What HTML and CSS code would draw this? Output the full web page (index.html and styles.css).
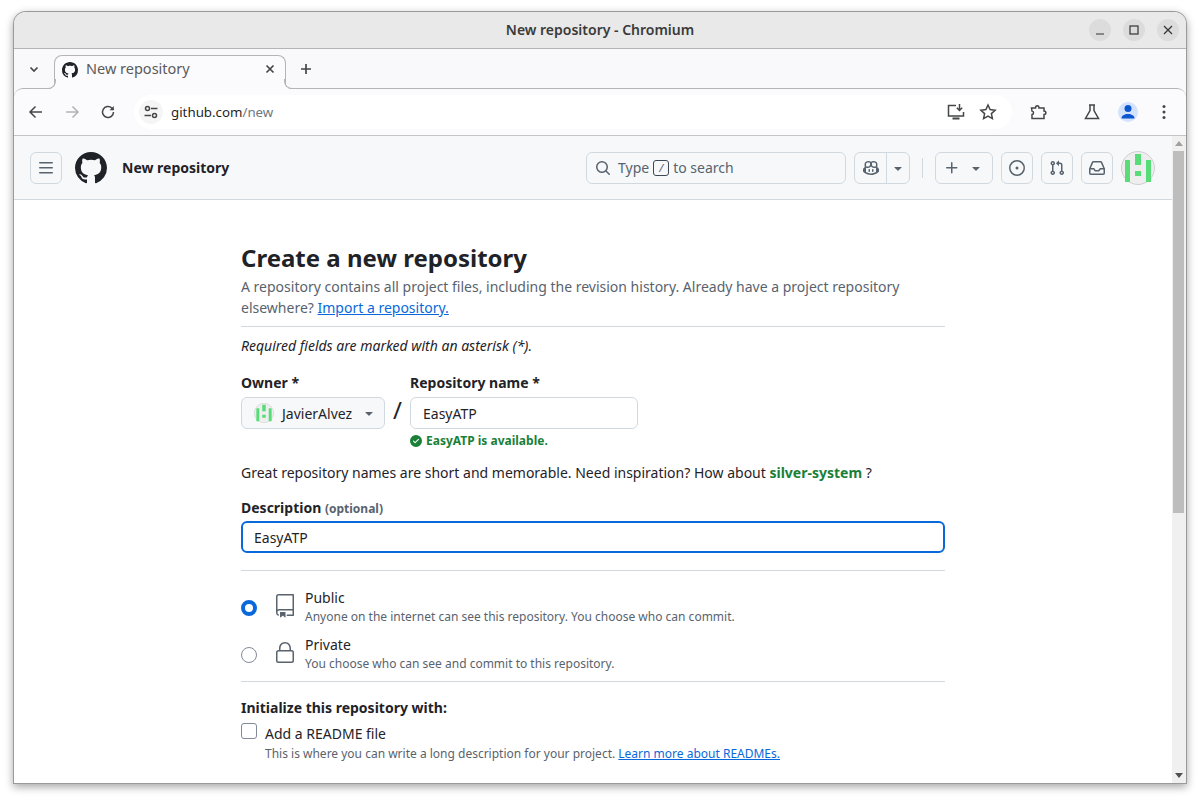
FILE: index.html
```html
<!DOCTYPE html>
<html lang="en">
<head>
<meta charset="utf-8">
<title>New repository - Chromium</title>
<link rel="stylesheet" href="styles.css">
</head>
<body>
<div class="window">
  <div class="titlebar">
    <span class="title">New repository - Chromium</span>
    <div class="win-controls">
      <span class="win-btn"><svg viewBox="0 0 22 22" class="i22"><path d="M7 15h8" class="wstroke"/></svg></span>
      <span class="win-btn"><svg viewBox="0 0 22 22" class="i22"><rect x="7" y="7" width="8" height="8" class="wstroke"/></svg></span>
      <span class="win-btn"><svg viewBox="0 0 22 22" class="i22"><path d="M7 7l8 8M15 7l-8 8" class="wstroke"/></svg></span>
    </div>
  </div>
  <div class="tabstrip">
    <span class="tab-menu"><svg viewBox="0 0 16 16" class="i16"><path d="M4.5 6.5 8 10l3.500-3.500" class="cstroke bold"/></svg></span>
    <div class="tab">
      <svg viewBox="0 0 16 16" class="i16 ink"><path d="M8 0c4.420 0 8 3.580 8 8a8.013 8.013 0 0 1-5.450 7.590c-.4.080-.55-.17-.55-.38 0-.27.010-1.130.010-2.200 0-.75-.25-1.230-.54-1.480 1.780-.2 3.650-.88 3.650-3.950 0-.88-.31-1.590-.82-2.150.080-.2.360-1.020-.08-2.120 0 0-.67-.22-2.200.82-.64-.18-1.320-.27-2-.27-.68 0-1.360.090-2 .27-1.530-1.030-2.200-.82-2.200-.82-.44 1.100-.16 1.920-.08 2.120-.51.560-.82 1.280-.82 2.150 0 3.060 1.860 3.750 3.640 3.950-.23.2-.44.55-.51 1.070-.46.210-1.610.55-2.330-.66-.15-.24-.6-.83-1.230-.82-.67.010-.27.380.010.530.34.190.73.9.82 1.130.16.450.68 1.310 2.690.94 0 .67.010 1.300.010 1.490 0 .21-.15.450-.55.380A7.995 7.995 0 0 1 0 8c0-4.420 3.580-8 8-8Z"/></svg>
      <span class="tab-title">New repository</span>
      <svg viewBox="0 0 16 16" class="i16 tab-close"><path d="M4.500 4.500l7 7M11.500 4.500l-7 7" class="cstroke bold"/></svg>
    </div>
    <span class="new-tab"><svg viewBox="0 0 16 16" class="i16"><path d="M8 3v10M3 8h10" class="cstroke bold"/></svg></span>
  </div>
  <div class="toolbar">
    <span class="tool"><svg viewBox="0 0 16 16" class="i16"><path d="M14 8H2.500M7.500 2.500 2 8l5.500 5.500" class="cstroke"/></svg></span>
    <span class="tool dim"><svg viewBox="0 0 16 16" class="i16"><path d="M2 8h11.500M8.500 2.500 14 8l-5.500 5.500" class="cstroke"/></svg></span>
    <span class="tool"><svg viewBox="0 0 16 16" class="i16"><path d="M13.500 8A5.500 5.500 0 1 1 11.800 4L13.500 5.700" class="cstroke"/><path d="M13.800 2v4.300H9.500z" class="cfill"/></svg></span>
    <div class="omnibox">
      <span class="site-info"><svg viewBox="0 0 16 16" class="i16"><circle cx="4.500" cy="4.500" r="2" class="cstroke"/><path d="M8 4.500h6.500M1.500 11.500H8" class="cstroke"/><circle cx="11.500" cy="11.500" r="2" class="cstroke"/></svg></span>
      <span class="url">github.com<span class="url-path">/new</span></span>
      <div class="omni-actions">
        <svg viewBox="0 0 18 18" class="i18"><path d="M9 2.500H1.500v10.500h15V9" class="cstroke"/><path d="M5.500 15.500h7" class="cstroke thick"/><path d="M12.500 1v6.500M9.800 4.800l2.700 2.700 2.700-2.700" class="cstroke"/></svg>
        <svg viewBox="0 0 18 18" class="i18"><path d="M9 2l2.100 4.600 5 .6-3.700 3.400 1 5L9 13.100l-4.400 2.500 1-5L1.900 7.200l5-.6z" class="cstroke"/></svg>
      </div>
    </div>
    <div class="extras">
      <span class="extra"><svg viewBox="0 0 18 18" class="i18"><path d="M2.500 5H6.500C6.500 2 10 2 10 5H15V8C17.500 8 17.500 11.500 15 11.500V15.500H3V11.500C5 11.500 5 8 3 8Z" class="cstroke"/></svg></span>
      <span class="extra"><svg viewBox="0 0 18 18" class="i18"><path d="M6 2h6M7 2v5.500L2.500 15.500h13L11 7.500V2" class="cstroke"/></svg></span>
      <span class="profile"><svg viewBox="0 0 20 20" class="i20"><circle cx="10" cy="6.500" r="3.500" class="pfill"/><path d="M3.500 16.500c0-3 3-4.500 6.500-4.500s6.500 1.500 6.500 4.500z" class="pfill"/></svg></span>
      <span class="extra dots"><svg viewBox="0 0 16 16" class="i16"><circle cx="8" cy="2.500" r="1.500" class="cfill"/><circle cx="8" cy="8" r="1.500" class="cfill"/><circle cx="8" cy="13.500" r="1.500" class="cfill"/></svg></span>
    </div>
  </div>
  <div class="viewport">
    <div class="page">
      <header class="gh-header">
        <div class="gh-left">
          <button class="gh-btn"><svg viewBox="0 0 16 16" class="i16 muted"><path d="M1 2.750A.75.75 0 0 1 1.750 2h12.500a.75.75 0 0 1 0 1.500H1.750A.75.75 0 0 1 1 2.750Zm0 5A.75.75 0 0 1 1.750 7h12.500a.75.75 0 0 1 0 1.500H1.750A.75.75 0 0 1 1 7.750ZM1.750 12h12.500a.75.75 0 0 1 0 1.500H1.750a.75.75 0 0 1 0-1.500Z"/></svg></button>
          <svg viewBox="0 0 16 16" class="gh-logo ink"><path d="M8 0c4.420 0 8 3.580 8 8a8.013 8.013 0 0 1-5.450 7.590c-.4.080-.55-.17-.55-.38 0-.27.010-1.130.010-2.200 0-.75-.25-1.230-.54-1.480 1.780-.2 3.650-.88 3.650-3.950 0-.88-.31-1.590-.82-2.150.080-.2.360-1.020-.08-2.120 0 0-.67-.22-2.200.82-.64-.18-1.320-.27-2-.27-.68 0-1.360.090-2 .27-1.530-1.030-2.200-.82-2.200-.82-.44 1.100-.16 1.920-.08 2.120-.51.560-.82 1.280-.82 2.150 0 3.060 1.860 3.750 3.640 3.950-.23.2-.44.55-.51 1.070-.46.210-1.610.55-2.330-.66-.15-.24-.6-.83-1.230-.82-.67.010-.27.380.010.530.34.190.73.9.82 1.130.16.450.68 1.310 2.690.94 0 .67.010 1.300.010 1.490 0 .21-.15.450-.55.380A7.995 7.995 0 0 1 0 8c0-4.420 3.580-8 8-8Z"/></svg>
          <span class="gh-title">New repository</span>
        </div>
        <div class="gh-right">
          <div class="search">
            <svg viewBox="0 0 16 16" class="i16 muted"><path d="M10.680 11.740a6 6 0 0 1-7.922-8.982 6 6 0 0 1 8.982 7.922l3.040 3.040a.749.749 0 0 1-.326 1.275.749.749 0 0 1-.734-.215ZM11.500 7a4.499 4.499 0 1 0-8.997 0A4.499 4.499 0 0 0 11.500 7Z"/></svg>
            <span class="search-text">Type <kbd class="slash">/</kbd> to search</span>
          </div>
          <div class="split">
            <span class="split-main"><svg viewBox="0 0 16 16" class="i16 muted"><path d="M7.998 15.035c-4.562 0-7.873-2.914-7.998-3.749V9.338c.085-.628.677-1.686 1.588-2.065.013-.07.024-.143.036-.218.029-.183.06-.384.126-.612-.201-.508-.254-1.084-.254-1.656 0-.87.128-1.769.693-2.484.579-.733 1.494-1.124 2.724-1.261 1.206-.134 2.262.034 2.944.765.05.053.096.108.139.165.044-.057.094-.112.143-.165.682-.731 1.738-.899 2.944-.765 1.230.137 2.145.528 2.724 1.261.566.715.693 1.614.693 2.484 0 .572-.053 1.148-.254 1.656.066.228.098.429.126.612.012.076.024.148.037.218.924.385 1.522 1.471 1.591 2.095v1.872c0 .766-3.351 3.795-8.002 3.795Zm0-1.485c2.280 0 4.584-1.110 5.002-1.433V7.862l-.023-.116c-.49.21-1.075.291-1.727.291-1.146 0-2.059-.327-2.710-.991A3.222 3.222 0 0 1 8 6.303a3.240 3.240 0 0 1-.544.743c-.65.664-1.563.991-2.710.991-.652 0-1.236-.081-1.727-.291l-.023.116v4.255c.419.323 2.722 1.433 5.002 1.433ZM6.762 2.830c-.193-.206-.637-.413-1.682-.297-1.019.113-1.479.404-1.713.7-.247.312-.369.789-.369 1.554 0 .793.129 1.171.308 1.371.162.181.519.379 1.442.379.853 0 1.339-.235 1.638-.54.315-.322.527-.827.617-1.553.117-.935-.037-1.395-.241-1.614Zm4.155-.297c-1.044-.116-1.488.091-1.681.297-.204.219-.359.679-.242 1.614.091.726.303 1.231.618 1.553.299.305.784.54 1.638.54.922 0 1.280-.198 1.442-.379.179-.2.308-.578.308-1.371 0-.765-.123-1.242-.37-1.554-.233-.296-.693-.587-1.713-.7Z"/><path d="M6.250 9.037a.75.75 0 0 1 .75.75v1.501a.75.75 0 0 1-1.500 0V9.787a.75.75 0 0 1 .75-.75Zm4.250.75v1.501a.75.75 0 0 1-1.500 0V9.787a.75.75 0 0 1 1.500 0Z"/></svg></span>
            <span class="split-caret"><svg viewBox="0 0 16 16" class="i16 muted"><path d="m4.427 7.427 3.396 3.396a.25.25 0 0 0 .354 0l3.396-3.396A.25.25 0 0 0 11.396 7H4.604a.25.25 0 0 0-.177.427Z"/></svg></span>
          </div>
          <span class="divider"></span>
          <button class="gh-btn wide">
            <svg viewBox="0 0 16 16" class="i16 muted"><path d="M7.750 2a.75.75 0 0 1 .75.75V7h4.250a.75.75 0 0 1 0 1.500H8.500v4.250a.75.75 0 0 1-1.500 0V8.500H2.750a.75.75 0 0 1 0-1.500H7V2.750A.75.75 0 0 1 7.750 2Z"/></svg>
            <svg viewBox="0 0 16 16" class="i16 muted"><path d="m4.427 7.427 3.396 3.396a.25.25 0 0 0 .354 0l3.396-3.396A.25.25 0 0 0 11.396 7H4.604a.25.25 0 0 0-.177.427Z"/></svg>
          </button>
          <button class="gh-btn"><svg viewBox="0 0 16 16" class="i16 muted"><path d="M8 9.500a1.500 1.500 0 1 0 0-3 1.500 1.500 0 0 0 0 3Z"/><path d="M8 0a8 8 0 1 1 0 16A8 8 0 0 1 8 0ZM1.500 8a6.500 6.500 0 1 0 13 0 6.500 6.500 0 0 0-13 0Z"/></svg></button>
          <button class="gh-btn"><svg viewBox="0 0 16 16" class="i16 muted"><path d="M1.500 3.250a2.250 2.250 0 1 1 3 2.122v5.256a2.251 2.251 0 1 1-1.500 0V5.372A2.250 2.250 0 0 1 1.500 3.250Zm5.677-.177L9.573.677A.25.25 0 0 1 10 .854V2.500h1A2.500 2.500 0 0 1 13.500 5v5.628a2.251 2.251 0 1 1-1.500 0V5a1 1 0 0 0-1-1h-1v1.646a.25.25 0 0 1-.427.177L7.177 3.427a.25.25 0 0 1 0-.354ZM3.750 2.500a.75.75 0 1 0 0 1.500.75.75 0 0 0 0-1.500Zm0 9.500a.75.75 0 1 0 0 1.500.75.75 0 0 0 0-1.500Zm8.250.75a.75.75 0 1 0 1.500 0 .75.75 0 0 0-1.500 0Z"/></svg></button>
          <button class="gh-btn"><svg viewBox="0 0 16 16" class="i16 muted"><path d="M2.800 2.060A1.750 1.750 0 0 1 4.410 1h7.180c.7 0 1.333.417 1.610 1.060l2.740 6.395c.04.093.06.194.06.295v4.500A1.750 1.750 0 0 1 14.250 15H1.750A1.750 1.750 0 0 1 0 13.250v-4.500c0-.101.02-.202.06-.295Zm1.610.44a.25.25 0 0 0-.23.152L1.887 8H4.750a.75.75 0 0 1 .6.3L6.625 10h2.750l1.275-1.700a.75.75 0 0 1 .6-.3h2.863L11.820 2.652a.25.25 0 0 0-.23-.152Zm10.090 7h-2.875l-1.275 1.700a.75.75 0 0 1-.6.3h-3.500a.75.75 0 0 1-.6-.3L4.375 9.500H1.500v3.750c0 .138.112.25.25.25h12.500a.25.25 0 0 0 .25-.25Z"/></svg></button>
          <svg viewBox="0 0 34 34" class="avatar-lg">
            <circle cx="17" cy="17" r="16.500" class="av-bg"/>
            <path d="M4 9h5v22H4zM14 3h6v11h-6zM14 20h6v5h-6zM25 9h5v22h-5z" class="av-g"/>
          </svg>
        </div>
      </header>
      <main class="content">
        <h1 class="heading">Create a new repository</h1>
        <p class="intro">A repository contains all project files, including the revision history. Already have a project repository elsewhere? <a class="link" href="#">Import a repository.</a></p>
        <hr class="rule first">
        <p class="required">Required fields are marked with an asterisk (*).</p>
        <div class="owner-row">
          <div class="field">
            <label class="label">Owner *</label>
            <div class="owner-select">
              <svg viewBox="0 0 34 34" class="avatar-sm">
                <circle cx="17" cy="17" r="16.500" class="av-bg"/>
                <path d="M4 9h5v22H4zM14 3h6v11h-6zM14 20h6v5h-6zM25 9h5v22h-5z" class="av-g"/>
              </svg>
              <span>JavierAlvez</span>
              <svg viewBox="0 0 16 16" class="i16 muted"><path d="m4.427 7.427 3.396 3.396a.25.25 0 0 0 .354 0l3.396-3.396A.25.25 0 0 0 11.396 7H4.604a.25.25 0 0 0-.177.427Z"/></svg>
            </div>
          </div>
          <span class="slash-sep">/</span>
          <div class="field">
            <label class="label">Repository name *</label>
            <div class="text-input name">EasyATP</div>
            <div class="available">
              <svg viewBox="0 0 16 16" class="i12"><path d="M8 16A8 8 0 1 1 8 0a8 8 0 0 1 0 16Zm3.780-9.720a.751.751 0 0 0-.018-1.042.751.751 0 0 0-1.042-.018L6.750 9.190 5.280 7.720a.751.751 0 0 0-1.042.018.751.751 0 0 0-.018 1.042l2 2a.75.75 0 0 0 1.060 0Z"/></svg>
              <span>EasyATP is available.</span>
            </div>
          </div>
        </div>
        <p class="inspire">Great repository names are short and memorable. Need inspiration? How about <strong class="suggest">silver-system</strong> ?</p>
        <label class="label desc-label">Description <span class="optional">(optional)</span></label>
        <div class="text-input focused">EasyATP</div>
        <hr class="rule vis-top">
        <div class="vis-option">
          <span class="radio checked"></span>
          <svg viewBox="0 0 24 24" class="vis-icon"><path d="M3 2.750A2.750 2.750 0 0 1 5.750 0h14.500a.75.75 0 0 1 .75.75v20.500a.75.75 0 0 1-.75.75h-6a.75.75 0 0 1 0-1.500h5.250v-4H6A1.500 1.500 0 0 0 4.500 18v.75c0 .716.43 1.334 1.050 1.605a.75.75 0 0 1-.6 1.374A3.251 3.251 0 0 1 3 18.750ZM19.500 1.500H5.750c-.69 0-1.250.56-1.250 1.250v12.651A2.989 2.989 0 0 1 6 15h13.500Z"/><path d="M7 18.250a.25.25 0 0 1 .25-.25h5a.25.25 0 0 1 .25.25v5.010a.25.25 0 0 1-.397.201l-2.206-1.604a.25.25 0 0 0-.294 0L7.397 23.460a.25.25 0 0 1-.397-.2Z"/></svg>
          <div class="vis-text"><div class="vis-name">Public</div><div class="note">Anyone on the internet can see this repository. You choose who can commit.</div></div>
        </div>
        <div class="vis-option">
          <span class="radio"></span>
          <svg viewBox="0 0 24 24" class="vis-icon"><path d="M6 9V7.250C6 3.845 8.503 1 12 1s6 2.845 6 6.250V9h.5a2.500 2.500 0 0 1 2.500 2.500v8a2.500 2.500 0 0 1-2.500 2.500h-13A2.500 2.500 0 0 1 3 19.500v-8A2.500 2.500 0 0 1 5.500 9Zm-1.500 2.500v8a1 1 0 0 0 1 1h13a1 1 0 0 0 1-1v-8a1 1 0 0 0-1-1h-13a1 1 0 0 0-1 1Zm3-4.250V9h9V7.250c0-2.670-1.922-4.750-4.500-4.750-2.578 0-4.500 2.080-4.500 4.750Z"/></svg>
          <div class="vis-text"><div class="vis-name">Private</div><div class="note">You choose who can see and commit to this repository.</div></div>
        </div>
        <hr class="rule vis-bottom">
        <div class="init-title">Initialize this repository with:</div>
        <div class="readme">
          <span class="checkbox"></span>
          <div>
            <div class="readme-name">Add a README file</div>
            <div class="note">This is where you can write a long description for your project. <a class="link" href="#">Learn more about READMEs.</a></div>
          </div>
        </div>
      </main>
    </div>
    <div class="scrollbar">
      <span class="arrow up"></span>
      <div class="track"><span class="thumb"></span></div>
      <span class="arrow down"></span>
    </div>
  </div>
</div>
</body>
</html>
```

FILE: styles.css
```css
* { box-sizing: border-box; }
html, body { margin: 0; height: 100%; background: #fff; overflow: hidden; }
body { padding: 12px 14px 17px; font-family: "Noto Sans", sans-serif; font-size: 14px; color: #1f2328; }
svg { display: block; flex: none; }
p { margin: 0; }

.window { height: 771px; display: flex; flex-direction: column; border-radius: 12px 12px 0 0; box-shadow: 0 0 0 1px #9a9a9a, 0 3px 8px 1px rgba(0,0,0,.35); overflow: hidden; background: #f9f9fb; }
.i12 { width: 12px; height: 12px; }
.i16 { width: 16px; height: 16px; }
.i18 { width: 18px; height: 18px; }
.i20 { width: 20px; height: 20px; }
.i22 { width: 22px; height: 22px; }
.ink { fill: #1f2328; }
.muted { fill: #59636e; }
.cstroke { fill: none; stroke: #444746; stroke-width: 1.5; }
.bold { stroke-width: 1.7; }
.thick { stroke-width: 2; }
.cfill { fill: #444746; }
.pfill { fill: #0b57d0; }
.wstroke { fill: none; stroke: #333; stroke-width: 1.2; }

.titlebar { height: 37px; flex: none; background: #e9e9e9; border-bottom: 1px solid #b4b4b4; display: flex; align-items: center; justify-content: center; position: relative; padding-bottom: 2px; }
.title { font-size: 14px; font-weight: 600; color: #3a3a3a; }
.win-controls { position: absolute; right: 7px; top: 7px; display: flex; gap: 12px; }
.win-btn { width: 22px; height: 22px; border-radius: 50%; background: #dcdcdc; }

.tabstrip { height: 39px; flex: none; display: flex; align-items: flex-start; padding-left: 12px; }
.tab-menu { width: 16px; height: 16px; margin-top: 12px; }
.tab { width: 232px; height: 34px; margin: 6px 0 -1px 12px; background: #fbfbfd; border: 1px solid #b4b4b4; border-bottom: 0; border-radius: 8px 8px 0 0; display: flex; align-items: center; padding: 0 8px 6px 7px; gap: 8px; color: #5a5a5a; position: relative; font-size: 14.5px; }
.tab::before, .tab::after { content: ""; position: absolute; bottom: 0; width: 9px; height: 9px; border-bottom: 1px solid #b4b4b4; }
.tab::before { left: -9px; border-right: 1px solid #b4b4b4; border-bottom-right-radius: 8px; box-shadow: 3px 3px 0 3px #fbfbfd; clip-path: inset(0 -6px -6px 0); }
.tab::after { right: -9px; border-left: 1px solid #b4b4b4; border-bottom-left-radius: 8px; box-shadow: -3px 3px 0 3px #fbfbfd; clip-path: inset(0 0 -6px -6px); }
.tab-title { flex: 1; position: relative; padding-bottom: 3px; }
.tab-close { margin: 0 -1px 1px 0; position: relative; }
.new-tab { width: 16px; height: 16px; margin: 12px 0 0 12px; }

.toolbar { height: 48px; flex: none; background: #fbfbfd; border-top: 1px solid #b4b4b4; border-bottom: 1px solid #c4c4c4; border-radius: 9px 9px 0 0; display: flex; align-items: center; padding: 0 14px; }
.tool { width: 16px; height: 16px; margin-right: 20px; }
.tool.dim { opacity: .4; }
.tool:nth-child(3) { margin-right: 18px; }
.omnibox { width: 878px; height: 34px; background: #fff; border-radius: 17px; display: flex; align-items: center; padding: 0 15px 0 5px; }
.site-info { width: 24px; height: 24px; border-radius: 50%; background: #f5f5f5; display: flex; align-items: center; justify-content: center; }
.url { margin-left: 8px; flex: 1; color: #1f1f1f; font-size: 13.3px; }
.url-path { color: #6f7780; }
.omni-actions { display: flex; gap: 14px; }
.extras { display: flex; align-items: center; flex: 1; padding-left: 17px; }
.extra { width: 18px; height: 18px; margin-right: 36px; }
.extras .extra:nth-child(2) { margin-right: 17px; }
.profile { width: 20px; height: 20px; border-radius: 50%; background: #d3e3fd; margin-right: 18px; }
.extra.dots { width: 16px; height: 16px; margin: 0; }

.viewport { flex: 1; min-height: 0; display: flex; background: #fff; }
.page { flex: 1; min-width: 0; overflow: hidden; }
.gh-header { height: 64px; background: #f6f8fa; border-bottom: 1px solid #d1d9e0; display: flex; align-items: center; justify-content: space-between; padding: 0 17px 0 16px; }
.gh-left, .gh-right { display: flex; align-items: center; }
.gh-right { gap: 8px; }
.gh-btn { width: 32px; height: 32px; padding: 0; background: transparent; border: 1px solid #d1d9e0; border-radius: 6px; display: flex; align-items: center; justify-content: center; }
.gh-btn.wide { width: 58px; gap: 8px; }
.gh-logo { width: 32px; height: 32px; margin-left: 13px; }
.gh-title { margin-left: 15px; font-weight: 700; }
.search { width: 260px; height: 32px; border: 1px solid #d1d9e0; border-radius: 6px; display: flex; align-items: center; gap: 7px; padding-left: 8px; color: #59636e; }
.search-text { display: flex; align-items: center; gap: 4px; }
.slash { width: 16px; height: 16px; border: 1px solid #3f4852; border-radius: 3px; font: italic 11px "Noto Sans", sans-serif; display: flex; align-items: center; justify-content: center; }
.split { width: 56px; height: 32px; border: 1px solid #d1d9e0; border-radius: 6px; display: flex; }
.split-main { width: 32px; border-right: 1px solid #d1d9e0; display: flex; align-items: center; justify-content: center; }
.split-caret { flex: 1; display: flex; align-items: center; justify-content: center; }
.divider { width: 1px; height: 20px; background: #d1d9e0; margin: 0 4px; }
.avatar-lg { width: 34px; height: 34px; margin-top: 1px; }
.avatar-sm { width: 20px; height: 20px; }
.av-bg { fill: #eeeeee; stroke: #cfcfcf; stroke-width: 1; }
.av-g { fill: #57dc78; }

.content { width: 704px; margin: 0 auto; padding-top: 40px; }
.heading { margin: 0; font-size: 24px; line-height: 36px; font-weight: 700; }
.intro { line-height: 21px; color: #59636e; }
.link { color: #0969da; text-decoration: underline; }
.rule { border: 0; height: 1px; background: #d1d9e0; margin: 0; }
.rule.first { margin-top: 8px; }
.required { font-style: italic; line-height: 21px; margin-top: 8px; }
.owner-row { display: flex; align-items: flex-start; margin-top: 16px; }
.label { display: block; font-weight: 700; line-height: 21px; margin-bottom: 4px; }
.owner-select { width: 144px; height: 32px; background: #f6f8fa; border: 1px solid #d1d9e0; border-radius: 6px; display: flex; align-items: center; padding-left: 12px; gap: 8px; }
.owner-select .muted { margin-left: 1px; }
.slash-sep { font-size: 24px; width: 25px; text-align: center; margin-top: 20px; line-height: 36px; }
.text-input { height: 32px; border: 1px solid #d1d9e0; border-radius: 6px; background: #fff; padding: 0 12px; display: flex; align-items: center; }
.text-input.name { width: 228px; }
.text-input.focused { border: 2px solid #0969da; padding: 0 11px; }
.available { display: flex; align-items: center; gap: 4px; margin-top: 3px; font-size: 12px; font-weight: 700; line-height: 18px; color: #1a7f37; fill: #1a7f37; }
.inspire { margin-top: 12px; line-height: 21px; }
.suggest { color: #1a7f37; font-weight: 700; }
.label.desc-label { margin-top: 14px; margin-bottom: 2px; }
.optional { font-size: 12px; color: #59636e; }
.rule.vis-top { margin-top: 17px; }
.vis-option { display: flex; align-items: center; height: 47px; }
.vis-top + .vis-option { margin-top: 12px; }
.radio { width: 16px; height: 16px; border-radius: 50%; border: 1px solid #818b98; margin: 2px 16px 0 0; background: #fff; }
.radio.checked { border: 4px solid #0969da; }
.vis-icon { width: 24px; height: 24px; fill: #59636e; margin: -2px 8px 0 0; }
.vis-name { line-height: 20px; }
.note { font-size: 12px; line-height: 18px; color: #59636e; }
.rule.vis-bottom { margin-top: 4px; }
.init-title { font-weight: 700; line-height: 21px; margin-top: 15px; }
.readme { display: flex; align-items: flex-start; margin-top: 4px; gap: 8px; }
.checkbox { width: 16px; height: 16px; border: 1px solid #818b98; border-radius: 3px; margin-top: 1px; }
.readme-name { line-height: 23px; }

.scrollbar { width: 14px; flex: none; background: #f0f0f0; display: flex; flex-direction: column; align-items: center; }
.arrow { width: 0; height: 0; border-left: 4px solid transparent; border-right: 4px solid transparent; flex: none; }
.arrow.up { border-bottom: 5px solid #a0a0a0; margin: 5px 0; }
.arrow.down { border-top: 5px solid #505050; margin: 5px 0; }
.track { flex: 1; width: 100%; padding: 0 2px 0 1px; }
.thumb { display: block; width: 11px; height: 362px; background: #bdbdbd; }
```
